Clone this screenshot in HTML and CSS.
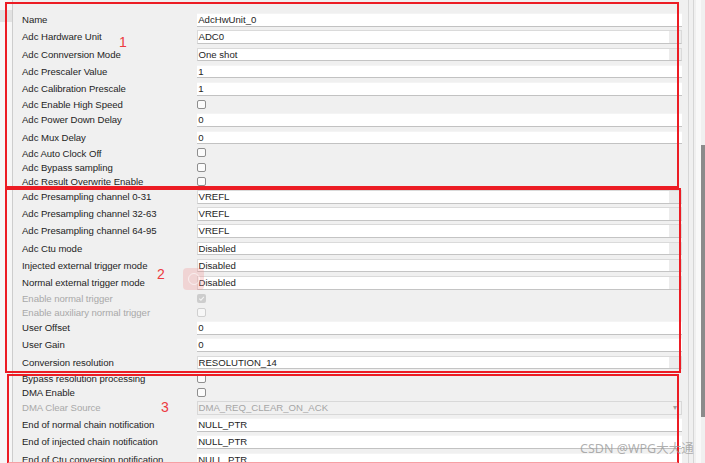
FILE: index.html
```html
<!DOCTYPE html>
<html>
<head>
<meta charset="utf-8">
<link rel="stylesheet" href="styles.css">
</head>
<body>
<div class="app">
  <div class="gutter"><div class="gutter-sel"></div></div>
  <div class="panel">
    <div class="row f"><span class="label">Name</span><div class="field text">AdcHwUnit_0</div></div>
    <div class="row f"><span class="label">Adc Hardware Unit</span><div class="field combo"><span class="val">ADC0</span><span class="btn"></span></div></div>
    <div class="row f"><span class="label">Adc Connversion Mode</span><div class="field combo"><span class="val">One shot</span><span class="btn"></span></div></div>
    <div class="row f"><span class="label">Adc Prescaler Value</span><div class="field text">1</div></div>
    <div class="row f"><span class="label">Adc Calibration Prescale</span><div class="field text">1</div></div>
    <div class="row c"><span class="label">Adc Enable High Speed</span><span class="check"></span></div>
    <div class="row f"><span class="label">Adc Power Down Delay</span><div class="field text">0</div></div>
    <div class="row f"><span class="label">Adc Mux Delay</span><div class="field text">0</div></div>
    <div class="row c"><span class="label">Adc Auto Clock Off</span><span class="check"></span></div>
    <div class="row c"><span class="label">Adc Bypass sampling</span><span class="check"></span></div>
    <div class="row c"><span class="label">Adc Result Overwrite Enable</span><span class="check"></span></div>
    <div class="row f"><span class="label">Adc Presampling channel 0-31</span><div class="field combo"><span class="val">VREFL</span><span class="btn"></span></div></div>
    <div class="row f"><span class="label">Adc Presampling channel 32-63</span><div class="field combo"><span class="val">VREFL</span><span class="btn"></span></div></div>
    <div class="row f"><span class="label">Adc Presampling channel 64-95</span><div class="field combo"><span class="val">VREFL</span><span class="btn"></span></div></div>
    <div class="row f"><span class="label">Adc Ctu mode</span><div class="field combo"><span class="val">Disabled</span><span class="btn"></span></div></div>
    <div class="row f"><span class="label">Injected external trigger mode</span><div class="field combo"><span class="val">Disabled</span><span class="btn"></span></div></div>
    <div class="row f"><span class="label">Normal external trigger mode</span><div class="field combo"><span class="val">Disabled</span><span class="btn"></span></div></div>
    <div class="row c"><span class="label disabled">Enable normal trigger</span><span class="check checked-dis"><svg viewBox="0 0 9 9" width="9" height="9"><path d="M2.2 4.6 L3.9 6.2 L6.9 2.8" fill="none" stroke="#f4f4f4" stroke-width="1.1"/></svg></span></div>
    <div class="row c"><span class="label disabled">Enable auxiliary normal trigger</span><span class="check dis"></span></div>
    <div class="row f"><span class="label">User Offset</span><div class="field text">0</div></div>
    <div class="row f"><span class="label">User Gain</span><div class="field text">0</div></div>
    <div class="row f"><span class="label">Conversion resolution</span><div class="field combo"><span class="val">RESOLUTION_14</span><span class="btn"></span></div></div>
    <div class="row c"><span class="label">Bypass resolution processing</span><span class="check"></span></div>
    <div class="row c"><span class="label">DMA Enable</span><span class="check"></span></div>
    <div class="row f"><span class="label disabled">DMA Clear Source</span><div class="field combo off"><span class="val">DMA_REQ_CLEAR_ON_ACK</span><span class="btn"><span class="arrow">&#9662;</span></span></div></div>
    <div class="row f"><span class="label">End of normal chain notification</span><div class="field text">NULL_PTR</div></div>
    <div class="row f"><span class="label">End of injected chain notification</span><div class="field text">NULL_PTR</div></div>
    <div class="row f"><span class="label">End of Ctu conversion notification</span><div class="field text">NULL_PTR</div></div>
  </div>
  <div class="scroll">
    <div class="sline"></div>
    <div class="sgap"></div>
    <div class="sline"></div>
    <div class="slight"></div>
    <div class="strack"><div class="thumb"></div></div>
  </div>
</div>

<div class="box box1"></div>
<div class="box box2"></div>
<div class="box box3"></div>
<span class="num n1">1</span>
<span class="num n2">2</span>
<span class="num n3">3</span>
<div class="float-btn"><span class="ring"></span></div>
<div class="watermark">CSDN @WPG大大通</div>
</body>
</html>
```

FILE: styles.css
```css
html, body {
  margin: 0;
  padding: 0;
  width: 705px;
  height: 463px;
  overflow: hidden;
  background: #f0f0f0;
  font-family: "Liberation Sans", "Noto Sans CJK SC", sans-serif;
  font-size: 9.6px;
  color: #1e1e1e;
}

.app {
  display: flex;
  height: 463px;
  overflow: hidden;
}

.gutter {
  width: 12px;
  flex: none;
  background: #f6f6f6;
  border-right: 1px solid #cdcdcd;
  padding-top: 10px;
  box-sizing: content-box;
}

.gutter-sel {
  height: 12px;
  background: #e2e2e2;
}

.panel {
  width: 669px;
  flex: none;
  padding: 12.5px 0 0 9px;
  box-sizing: border-box;
}

.row {
  display: grid;
  grid-template-columns: 174.7px 1fr;
  align-items: start;
}

.row.f { height: 17.2px; }
.row.c { height: 14.1px; }

.label {
  white-space: nowrap;
  line-height: 14px;
  padding-top: 0.8px;
  letter-spacing: -0.05px;
}
.row.c .label { line-height: 12px; padding-top: 0.8px; }

.label.disabled { color: #a9a9a9; }

.field {
  margin-top: 0.8px;
  height: 13.6px;
  box-sizing: border-box;
  line-height: 12.6px;
  white-space: nowrap;
  overflow: hidden;
}

.field.text {
  background: #ffffff;
  border-top: 1px solid #f4f4f4;
  border-bottom: 1px solid #c2c2c2;
  padding-left: 1.5px;
}

.field.combo {
  display: flex;
  background: #ffffff;
  border: 1px solid #dadada;
  border-bottom-color: #c4c4c4;
}

.field.combo .val {
  flex: 1;
  padding-left: 0.8px;
}

.field.combo .btn {
  width: 12px;
  flex: none;
  background: #ececec;
  position: relative;
}

.field.combo.off {
  background: #f0f0f0;
  color: #a6a6a6;
  border-color: #d8d8d8;
}

.field.combo.off .btn { background: #f0f0f0; }

.arrow {
  display: block;
  font-size: 8px;
  color: #a0a0a0;
  text-align: center;
  line-height: 12px;
}

.check {
  margin-top: 1.5px;
  width: 9px;
  height: 9px;
  box-sizing: border-box;
  border: 1px solid #8e8e8e;
  border-radius: 2px;
  background: #fbfbfb;
  display: block;
}

.check.dis {
  border-color: #cfcfcf;
  background: #f7f7f7;
}

.check.checked-dis {
  border: none;
  background: #cdcdcd;
}
.check.checked-dis svg { display: block; }

.scroll {
  flex: 1;
  display: flex;
  background: #f0f0f0;
}

.sgap { width: 4px; }
.scroll > .sline:first-child { margin-left: 6px; }
.sline { width: 1px; background: #d6d6d6; }
.slight { width: 5px; margin-left: 2px; background: #f9f9f9; }
.strack {
  flex: 1;
  padding-top: 145px;
}
.thumb {
  height: 272px;
  background: #8b8b8b;
}

/* annotation overlays */
.box {
  position: absolute;
  border: 2px solid #ec1c24;
  box-sizing: border-box;
}
.box1 { left: 5px; top: 2px; width: 674px; height: 186px; }
.box2 { left: 5px; top: 188px; width: 676px; height: 185px; }
.box3 { left: 7px; top: 374px; width: 672px; height: 90px; border-bottom-color: #f7a0a4; }

.num {
  position: absolute;
  color: #ec3b40;
  font-family: "Liberation Sans", sans-serif;
  font-size: 14px;
  line-height: 14px;
}
.n1 { left: 119px; top: 35px; }
.n2 { left: 157px; top: 267px; }
.n3 { left: 161px; top: 400px; }

.float-btn {
  position: absolute;
  left: 183px;
  top: 268px;
  width: 21px;
  height: 22px;
  border-radius: 4px;
  background: rgba(240, 140, 140, 0.28);
}
.ring {
  position: absolute;
  left: 5px;
  top: 5px;
  width: 10px;
  height: 10px;
  border: 1px solid rgba(255, 255, 255, 0.6);
  border-radius: 50%;
}

.watermark {
  position: absolute;
  left: 580px;
  top: 442px;
  font-family: "Noto Sans", "Noto Sans CJK SC", sans-serif;
  font-size: 12.5px;
  line-height: 14px;
  color: rgba(150, 150, 150, 0.75);
  white-space: nowrap;
}
```
